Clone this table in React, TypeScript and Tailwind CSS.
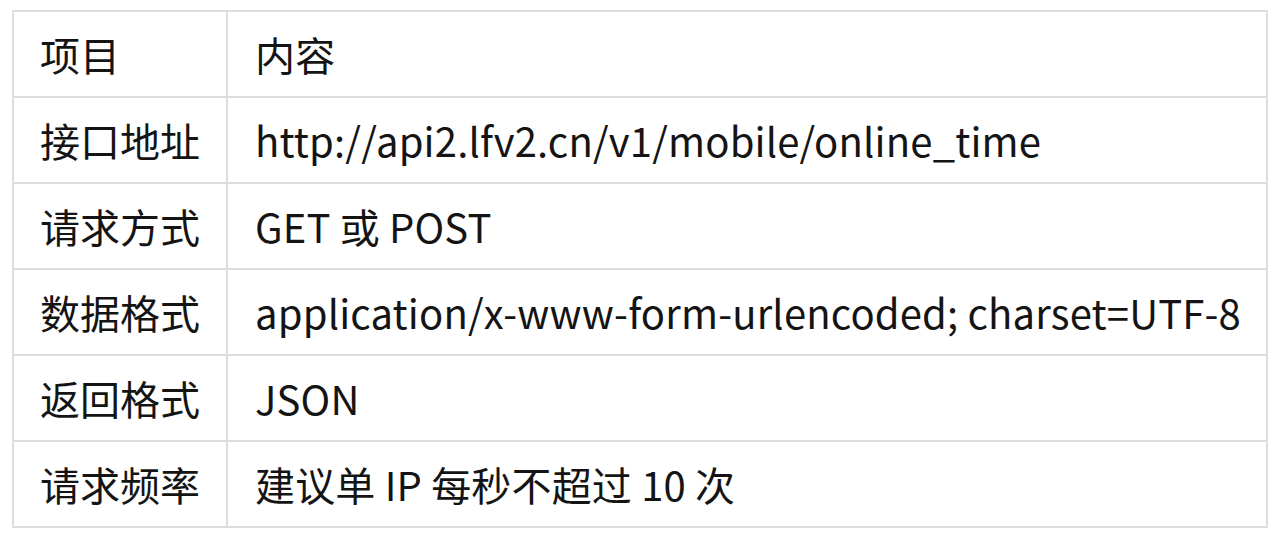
const rows: [string, string][] = [
  ["项目", "内容"],
  ["接口地址", "http://api2.lfv2.cn/v1/mobile/online_time"],
  ["请求方式", "GET 或 POST"],
  ["数据格式", "application/x-www-form-urlencoded; charset=UTF-8"],
  ["返回格式", "JSON"],
  ["请求频率", "建议单 IP 每秒不超过 10 次"],
];

export default function App() {
  return (
    <div
      className="w-[1280px] h-[533px] bg-white pl-[12px] pt-[10px]"
      style={{ fontFamily: '"Noto Sans CJK SC", "Noto Sans", sans-serif' }}
    >
      <div className="w-[1256px] grid grid-cols-[212px_1fr] gap-[2px] p-[2px] bg-[#dedede]">
        {rows.map(([k, v]) => (
          <div key={k} className="contents">
            <div className="h-[84px] bg-white flex items-center pl-[26px] text-[40px] text-[#141414] whitespace-nowrap">
              {k}
            </div>
            <div className="h-[84px] bg-white flex items-center pl-[27px] text-[40px] tracking-[0.17px] text-[#141414] whitespace-nowrap">
              {v}
            </div>
          </div>
        ))}
      </div>
    </div>
  );
}
